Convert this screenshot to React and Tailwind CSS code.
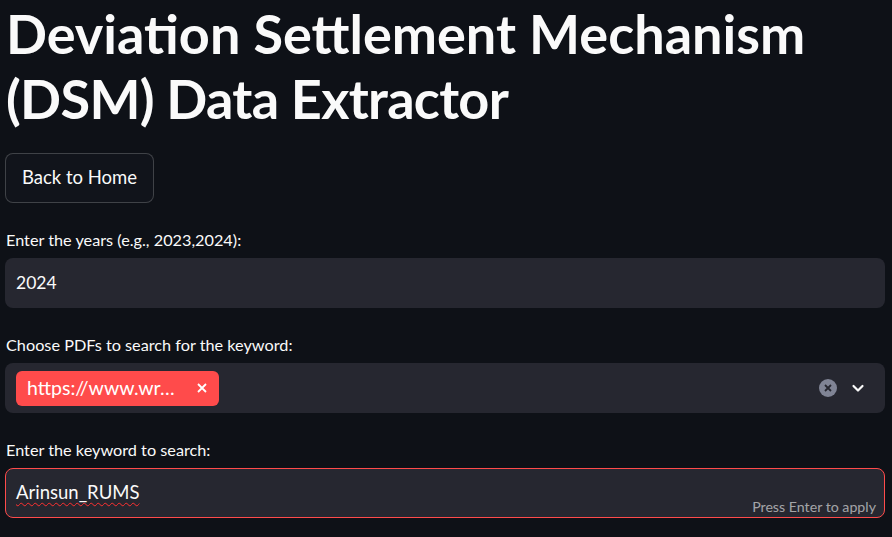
import React from "react";

const font = { fontFamily: "Lato, 'Noto Sans', sans-serif" };

export default function App() {
  return (
    <div className="min-h-[537px] w-full bg-[#0e1117] text-[#fafafa] overflow-hidden" style={font}>
      <div className="pl-[5px] pr-[7px] flex flex-col">
        <h1 className="text-[54px] font-bold leading-[65px] pl-[1px] pt-[1px]">
          Deviation Settlement Mechanism
          <br />
          <span className="tracking-[-0.7px]">(DSM) Data Extractor</span>
        </h1>
        <div className="mt-[22px]">
          <button className="h-[50px] px-[16px] rounded-lg border border-[#fafafa]/20 bg-[#11141b] text-[18.5px] text-[#fafafa]">
            Back to Home
          </button>
        </div>

        <label className="mt-[27px] text-[16.25px] leading-[20px] pl-[1px]">Enter the years (e.g., 2023,2024):</label>
        <div className="mt-[8px] h-[50px] rounded-lg bg-[#262730] flex items-center px-[11px] text-[17.5px]">2024</div>

        <label className="mt-[27px] text-[16.25px] leading-[20px] pl-[1px]">Choose PDFs to search for the keyword:</label>
        <div className="mt-[8px] h-[50px] rounded-lg bg-[#262730] flex items-center pl-[11px] pr-[20px]">
          <div className="h-[35px] w-[203px] rounded-md bg-[#ff4b4b] flex items-center pl-[11px] pr-[12px] text-[19.5px] text-white">
            <span className="flex-1">https://www.wr…</span>
            <svg width="10" height="10" viewBox="0 0 10 10"><path d="M1 1L9 9M9 1L1 9" stroke="white" strokeWidth="1.8" /></svg>
          </div>
          <div className="flex-1" />
          <div className="w-[18px] h-[18px] rounded-full bg-[#808495] flex items-center justify-center">
            <svg width="8" height="8" viewBox="0 0 8 8"><path d="M1 1L7 7M7 1L1 7" stroke="#262730" strokeWidth="1.8" /></svg>
          </div>
          <svg className="ml-[14px]" width="14" height="14" viewBox="0 0 14 14"><path d="M2.5 5L7 9.5L11.5 5" stroke="#fafafa" strokeWidth="2.2" fill="none" strokeLinecap="round" strokeLinejoin="round" /></svg>
        </div>

        <label className="mt-[27px] text-[16.25px] leading-[20px] pl-[1px]">Enter the keyword to search:</label>
        <div className="mt-[8px] h-[50px] rounded-lg bg-[#262730] border border-[#ff4b4b] relative flex items-center px-[10px] text-[18.5px]">
          <span className="underline decoration-wavy decoration-[#ff3030] decoration-1 underline-offset-[3px]">Arinsun_RUMS</span>
          <span className="absolute right-[8px] bottom-[0px] text-[14.2px] text-[#fafafa]/60">Press Enter to apply</span>
        </div>
      </div>
    </div>
  );
}
